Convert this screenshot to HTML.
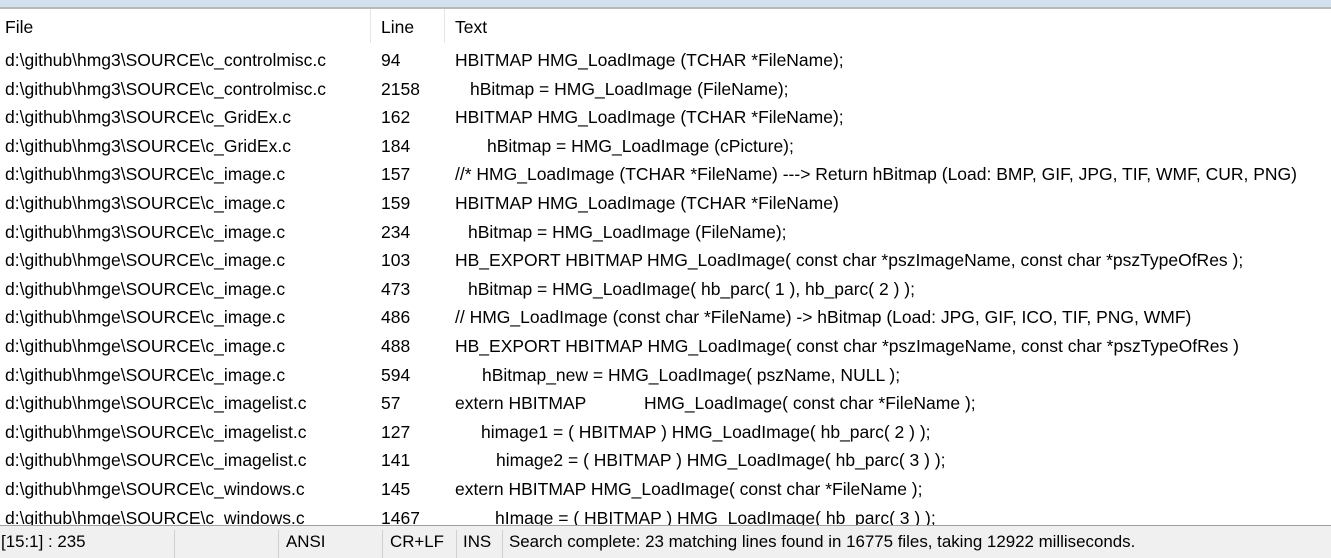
<!DOCTYPE html>
<html><head><meta charset="utf-8"><style>
body{margin:0;width:1331px;height:557px;overflow:hidden;background:#fff;font-family:"Liberation Sans",sans-serif;font-size:17.5px;color:#000;position:relative}
.top{position:absolute;left:0;top:0;width:1331px;height:7px;background:#d3e1ef}
.topl{position:absolute;left:0;top:7px;width:1331px;height:2px;background:#b9b9b9}
.hs{position:absolute;top:9px;width:1px;height:34px;background:#e5e5e5}
.r{position:absolute;left:0;height:28px;line-height:28px;white-space:pre}
.r span{position:absolute;top:0}
.f{left:5px}.l{left:381px}.t{left:455px}
.sb{position:absolute;left:0;top:525px;width:1331px;height:32px;background:#f0f0f0;border-top:1px solid #a0a0a0;font-size:16.9px}
.sb span{position:absolute;top:0;line-height:32px;white-space:pre}
.sp{position:absolute;top:4px;width:1px;height:28px;background:#d0d0d0}
</style></head><body>
<div class="top"></div><div class="topl"></div>
<div class="hs" style="left:370px"></div><div class="hs" style="left:444px"></div>
<div class="r" style="top:13px"><span class="f">File</span><span class="l">Line</span><span class="t">Text</span></div>

<div class="r" style="top:46px"><span class="f">d:\github\hmg3\SOURCE\c_controlmisc.c</span><span class="l">94</span><span class="t">HBITMAP HMG_LoadImage (TCHAR *FileName);</span></div>
<div class="r" style="top:74.6px"><span class="f">d:\github\hmg3\SOURCE\c_controlmisc.c</span><span class="l">2158</span><span class="t" style="left:470px">hBitmap = HMG_LoadImage (FileName);</span></div>
<div class="r" style="top:103.2px"><span class="f">d:\github\hmg3\SOURCE\c_GridEx.c</span><span class="l">162</span><span class="t">HBITMAP HMG_LoadImage (TCHAR *FileName);</span></div>
<div class="r" style="top:131.8px"><span class="f">d:\github\hmg3\SOURCE\c_GridEx.c</span><span class="l">184</span><span class="t" style="left:487px">hBitmap = HMG_LoadImage (cPicture);</span></div>
<div class="r" style="top:160.4px"><span class="f">d:\github\hmg3\SOURCE\c_image.c</span><span class="l">157</span><span class="t">//* HMG_LoadImage (TCHAR *FileName) ---&gt; Return hBitmap (Load: BMP, GIF, JPG, TIF, WMF, CUR, PNG)</span></div>
<div class="r" style="top:189px"><span class="f">d:\github\hmg3\SOURCE\c_image.c</span><span class="l">159</span><span class="t">HBITMAP HMG_LoadImage (TCHAR *FileName)</span></div>
<div class="r" style="top:217.6px"><span class="f">d:\github\hmg3\SOURCE\c_image.c</span><span class="l">234</span><span class="t" style="left:468px">hBitmap = HMG_LoadImage (FileName);</span></div>
<div class="r" style="top:246.2px"><span class="f">d:\github\hmge\SOURCE\c_image.c</span><span class="l">103</span><span class="t">HB_EXPORT HBITMAP</span><span style="left:647px">HMG_LoadImage( const char *pszImageName, const char *pszTypeOfRes );</span></div>
<div class="r" style="top:274.8px"><span class="f">d:\github\hmge\SOURCE\c_image.c</span><span class="l">473</span><span class="t" style="left:468px">hBitmap = HMG_LoadImage( hb_parc( 1 ), hb_parc( 2 ) );</span></div>
<div class="r" style="top:303.4px"><span class="f">d:\github\hmge\SOURCE\c_image.c</span><span class="l">486</span><span class="t">// HMG_LoadImage (const char *FileName) -&gt; hBitmap (Load: JPG, GIF, ICO, TIF, PNG, WMF)</span></div>
<div class="r" style="top:332px"><span class="f">d:\github\hmge\SOURCE\c_image.c</span><span class="l">488</span><span class="t">HB_EXPORT HBITMAP HMG_LoadImage( const char *pszImageName, const char *pszTypeOfRes )</span></div>
<div class="r" style="top:360.6px"><span class="f">d:\github\hmge\SOURCE\c_image.c</span><span class="l">594</span><span class="t" style="left:482px">hBitmap_new = HMG_LoadImage( pszName, NULL );</span></div>
<div class="r" style="top:389.2px"><span class="f">d:\github\hmge\SOURCE\c_imagelist.c</span><span class="l">57</span><span class="t">extern HBITMAP</span><span style="left:644px">HMG_LoadImage( const char *FileName );</span></div>
<div class="r" style="top:417.8px"><span class="f">d:\github\hmge\SOURCE\c_imagelist.c</span><span class="l">127</span><span class="t" style="left:481px">himage1 = ( HBITMAP ) HMG_LoadImage( hb_parc( 2 ) );</span></div>
<div class="r" style="top:446.4px"><span class="f">d:\github\hmge\SOURCE\c_imagelist.c</span><span class="l">141</span><span class="t" style="left:496px">himage2 = ( HBITMAP ) HMG_LoadImage( hb_parc( 3 ) );</span></div>
<div class="r" style="top:475px"><span class="f">d:\github\hmge\SOURCE\c_windows.c</span><span class="l">145</span><span class="t">extern HBITMAP HMG_LoadImage( const char *FileName );</span></div>
<div class="r" style="top:503.6px"><span class="f">d:\github\hmge\SOURCE\c_windows.c</span><span class="l">1467</span><span class="t" style="left:495px">hImage = ( HBITMAP ) HMG_LoadImage( hb_parc( 3 ) );</span></div>

<div class="sb">
<span style="left:1px">[15:1] : 235</span>
<div class="sp" style="left:174px"></div>
<div class="sp" style="left:278px"></div>
<span style="left:286px">ANSI</span>
<div class="sp" style="left:382px"></div>
<span style="left:390px">CR+LF</span>
<div class="sp" style="left:456px"></div>
<span style="left:463px">INS</span>
<div class="sp" style="left:502px"></div>
<span style="left:509px">Search complete: 23 matching lines found in 16775 files, taking 12922 milliseconds.</span>
</div>
</body></html>
